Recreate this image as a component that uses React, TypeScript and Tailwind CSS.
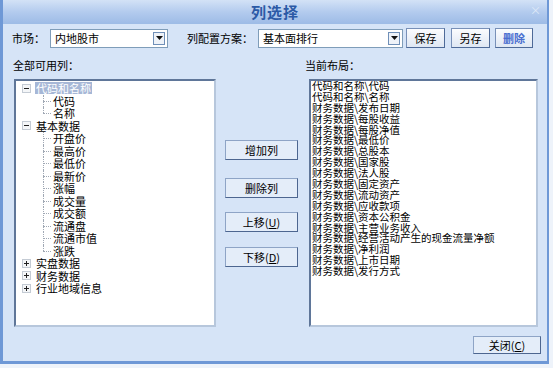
import React from 'react'

const font = { fontFamily: '"Noto Sans CJK SC", "DejaVu Sans", sans-serif' }

type Node = { label: string; open?: boolean; selected?: boolean; children?: string[] }

const tree: Node[] = [
  { label: '代码和名称', open: true, selected: true, children: ['代码', '名称'] },
  {
    label: '基本数据',
    open: true,
    children: ['开盘价', '最高价', '最低价', '最新价', '涨幅', '成交量', '成交额', '流通盘', '流通市值', '涨跌'],
  },
  { label: '实盘数据' },
  { label: '财务数据' },
  { label: '行业地域信息' },
]

const layout = [
  '代码和名称\\代码',
  '代码和名称\\名称',
  '财务数据\\发布日期',
  '财务数据\\每股收益',
  '财务数据\\每股净值',
  '财务数据\\最低价',
  '财务数据\\总股本',
  '财务数据\\国家股',
  '财务数据\\法人股',
  '财务数据\\固定资产',
  '财务数据\\流动资产',
  '财务数据\\应收款项',
  '财务数据\\资本公积金',
  '财务数据\\主营业务收入',
  '财务数据\\经营活动产生的现金流量净额',
  '财务数据\\净利润',
  '财务数据\\上市日期',
  '财务数据\\发行方式',
]

function Expander({ open }: { open?: boolean }) {
  return (
    <svg width="9" height="9" viewBox="0 0 9 9" className="shrink-0">
      <rect x="0.5" y="0.5" width="8" height="8" fill="#f4f6f8" stroke="#c4cbd4" />
      <line x1="2" y1="4.5" x2="7" y2="4.5" stroke="#222" />
      {!open && <line x1="4.5" y1="2" x2="4.5" y2="7" stroke="#222" />}
    </svg>
  )
}

function Combo({ value, width }: { value: string; width: string }) {
  return (
    <div className={`${width} h-[19px] bg-white border border-[#7f9db9] flex items-center justify-between pl-[4px] pr-[2px]`}>
      <span className="text-[11px] leading-none text-black">{value}</span>
      <div className="w-[12px] h-[13px] border border-[#6f8fb8] bg-[#eef2f8] flex items-center justify-center">
        <svg width="7" height="4" viewBox="0 0 7 4">
          <path d="M0 0 L7 0 L3.5 4 Z" fill="#111" />
        </svg>
      </div>
    </div>
  )
}

function TopButton({ children, width, blue }: { children: React.ReactNode; width: string; blue?: boolean }) {
  return (
    <div
      className={`${width} h-[20px] flex items-center justify-center border border-[#7890b8] border-r-[#4e6a98] border-b-[#4e6a98] bg-gradient-to-b from-[#fbfcfe] to-[#dfe7f3] text-[11px] ${
        blue ? 'text-[#4a6fd0] font-bold' : 'text-black'
      }`}
    >
      {children}
    </div>
  )
}

function MidButton({ children }: { children: React.ReactNode }) {
  return (
    <div className="w-[73px] h-[20px] flex items-center justify-center border border-[#8ea4c6] border-r-[#4d6690] border-b-[#4d6690] bg-[#e4edf9] text-[11px] text-black">
      {children}
    </div>
  )
}

export default function App() {
  return (
    <div className="w-[553px] h-[368px] bg-[#eef3fa] overflow-hidden" style={font}>
      <div className="w-[549px] h-[364px] border-l-[3px] border-r-[2px] border-b-[3px] border-[#6e98d6] bg-[#d6e4f7] flex flex-col">
        {/* Title bar */}
        <div className="relative h-[24px] bg-gradient-to-b from-[#d3e2f6] via-[#b3cbee] to-[#9dbbe6] flex items-center justify-center">
          <span className="text-[15px] font-bold text-[#2c5aa6] tracking-[1px]">列选择</span>
          <span className="absolute right-[6px] top-[5px] text-[11px] text-[#dfe9f8] leading-none">×</span>
        </div>

        {/* Market / config row */}
        <div className="flex items-center h-[20px] mt-[4px] pl-[9px]">
          <span className="w-[38px] text-[11px] text-black">市场：</span>
          <Combo value="内地股市" width="w-[118px]" />
          <span className="ml-[19px] w-[71px] text-[11px] text-black">列配置方案：</span>
          <Combo value="基本面排行" width="w-[145px]" />
          <div className="ml-[3px]">
            <TopButton width="w-[39px]">保存</TopButton>
          </div>
          <div className="ml-[6px]">
            <TopButton width="w-[39px]">另存</TopButton>
          </div>
          <div className="ml-[5px]">
            <TopButton width="w-[38px]" blue>
              删除
            </TopButton>
          </div>
        </div>

        {/* Labels */}
        <div className="flex h-[14px] mt-[10px] text-[11px] text-black leading-[14px]">
          <span className="ml-[10px] w-[292px]">全部可用列：</span>
          <span>当前布局：</span>
        </div>

        {/* Main area */}
        <div className="flex mt-[7px] h-[248px]">
          {/* Tree */}
          <div className="ml-[11px] w-[202px] h-[248px] bg-white border-2 border-[#b7c7dc] border-t-[#5f7699] border-l-[#5f7699] pt-[1px] overflow-hidden">
            {tree.map((n) => (
              <div key={n.label}>
                <div className="flex items-center h-[12.5px] pl-[6px]">
                  <Expander open={n.open} />
                  <span
                    className={`ml-[4px] text-[11px] leading-[12px] px-[1px] ${
                      n.selected ? 'bg-[#a6b7d6] text-white' : 'text-black'
                    }`}
                  >
                    {n.label}
                  </span>
                </div>
                {n.open &&
                  n.children?.map((c, i) => (
                    <div key={c} className="relative flex items-center h-[12.5px] pl-[37px]">
                      <div
                        className={`absolute left-[27px] top-0 border-l border-dotted border-[#a0a8b4] ${
                          i === (n.children?.length ?? 0) - 1 ? 'h-[6px]' : 'h-full'
                        }`}
                      />
                      <div className="absolute left-[27px] top-[6px] w-[8px] border-t border-dotted border-[#a0a8b4]" />
                      <span className="text-[11px] leading-[12px] text-black">{c}</span>
                    </div>
                  ))}
              </div>
            ))}
          </div>

          {/* Middle buttons */}
          <div className="ml-[9px] flex flex-col pt-[61px]">
            <MidButton>增加列</MidButton>
            <div className="mt-[18px]">
              <MidButton>删除列</MidButton>
            </div>
            <div className="mt-[14px]">
              <MidButton>
                上移(<span className="underline">U</span>)
              </MidButton>
            </div>
            <div className="mt-[15px]">
              <MidButton>
                下移(<span className="underline">D</span>)
              </MidButton>
            </div>
          </div>

          {/* Current layout */}
          <div className="ml-[11px] w-[229px] h-[248px] bg-white border-2 border-[#b7c7dc] border-t-[#5f7699] border-l-[#5f7699] pl-[1px] overflow-hidden">
            {layout.map((t, i) => (
              <div key={i} className="h-[10.9px] text-[10.5px] leading-[10.9px] text-black whitespace-nowrap">
                {t}
              </div>
            ))}
          </div>
        </div>

        {/* Close */}
        <div className="flex justify-end mt-[9px] pr-[6px]">
          <div className="w-[68px] h-[18px] flex items-center justify-center border border-[#8ea4c6] border-r-[#4d6690] border-b-[#4d6690] bg-[#e4edf9] text-[11px] text-black">
            关闭(<span className="underline">C</span>)
          </div>
        </div>
      </div>
    </div>
  )
}
